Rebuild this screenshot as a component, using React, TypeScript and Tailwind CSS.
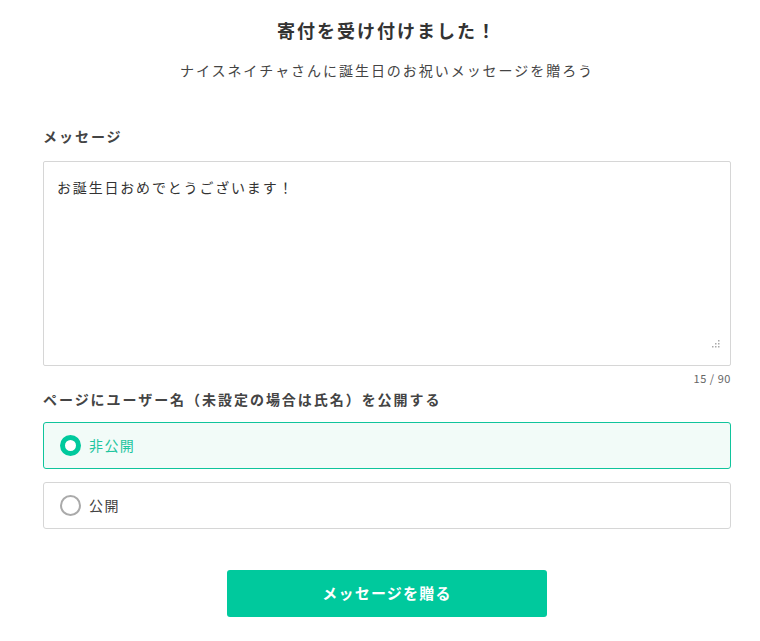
import React from "react";

const font = { fontFamily: '"Noto Sans CJK JP", "Noto Sans", sans-serif' };

export default function App() {
  return (
    <div className="w-[760px] h-[641px] overflow-hidden bg-white">
      <div style={font} className="w-[774px] text-[#333] px-[43px]">
        <h1 className="pt-[16px] text-center text-[18px] leading-[28px] font-bold tracking-[0.11em] text-[#333]">寄付を受け付けました！</h1>
        <p className="mt-[14px] text-center text-[14px] leading-[24px] tracking-[0.14em] text-[#444]">ナイスネイチャさんに誕生日のお祝いメッセージを贈ろう</p>

        <div className="mt-[43px] text-[14px] leading-[22px] font-bold tracking-[0.14em] text-[#444]">メッセージ</div>
        <div className="relative mt-[14px] h-[205px] border border-[#d6d6d6] rounded-[2px]">
          <div className="px-[13px] pt-[14px] text-[14px] leading-[22px] tracking-[0.13em] text-[#333]">お誕生日おめでとうございます！</div>
          <svg className="absolute right-[10px] bottom-[17px]" width="8" height="8" viewBox="0 0 8 8">
            <g fill="#aaa">
              <rect x="6" y="0" width="1.5" height="1.5" />
              <rect x="3" y="3" width="1.5" height="1.5" />
              <rect x="6" y="3" width="1.5" height="1.5" />
              <rect x="0" y="6" width="1.5" height="1.5" />
              <rect x="3" y="6" width="1.5" height="1.5" />
              <rect x="6" y="6" width="1.5" height="1.5" />
            </g>
          </svg>
        </div>
        <div className="mt-[5px] text-right text-[11px] leading-[14px] tracking-[0.05em] text-[#666]">15 / 90</div>

        <div className="mt-[3px] text-[14px] leading-[22px] font-bold tracking-[0.14em] text-[#444]">ページにユーザー名（未設定の場合は氏名）を公開する</div>

        <div className="mt-[12px] flex flex-col gap-[13px]">
          <div className="h-[47px] flex items-center gap-[8px] pl-[16px] border border-[#10c49c] bg-[#f2fbf8] rounded-[3px]">
            <span className="w-[21px] h-[21px] rounded-full border-[5px] border-[#00c99d] bg-white" />
            <span className="text-[14px] tracking-[0.1em] text-[#1ec59f]">非公開</span>
          </div>
          <div className="h-[47px] flex items-center gap-[8px] pl-[16px] border border-[#d6d6d6] bg-white rounded-[3px]">
            <span className="w-[21px] h-[21px] rounded-full border-2 border-[#aaa] bg-white" />
            <span className="text-[14px] tracking-[0.1em] text-[#444]">公開</span>
          </div>
        </div>

        <div className="mt-[41px] flex justify-center">
          <button className="w-[320px] h-[47px] rounded-[3px] bg-[#00c99d] text-white text-[15px] font-bold tracking-[0.08em]">メッセージを贈る</button>
        </div>
      </div>
    </div>
  );
}
